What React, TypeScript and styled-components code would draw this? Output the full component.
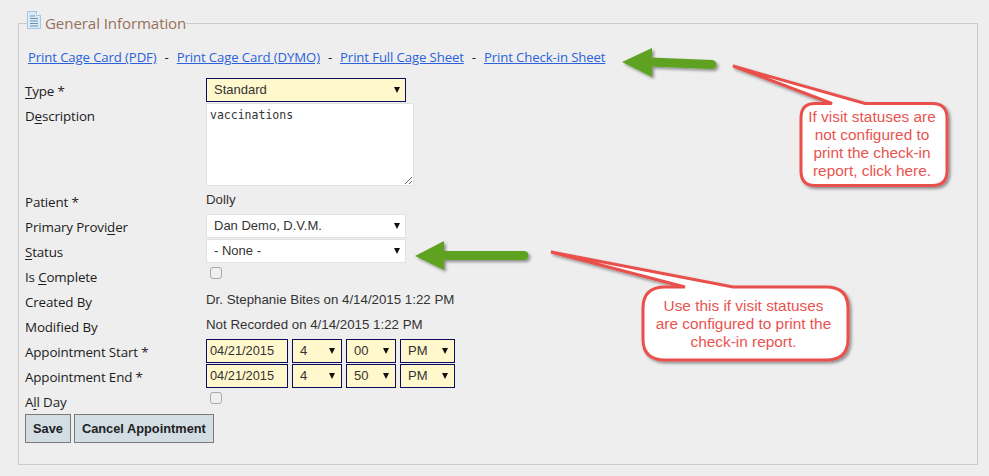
import styled, { createGlobalStyle } from "styled-components";

const GlobalStyle = createGlobalStyle`
  html, body {
    margin: 0;
    padding: 0;
    background: #eeeeee;
  }
  body {
    font-family: "Open Sans", "Noto Sans", sans-serif;
    color: #222;
  }
`;

const Page = styled.div`
  position: relative;
  width: 989px;
  height: 476px;
  overflow: hidden;
  padding: 11px 11px 0 18px;
  box-sizing: border-box;
`;

const Panel = styled.fieldset`
  margin: 0;
  padding: 0 6px;
  width: 960px;
  height: 454px;
  box-sizing: border-box;
  border: 1px solid #cbcbcb;
  border-radius: 0;
`;

const Legend = styled.legend`
  margin-left: 2px;
  padding: 0;
  display: flex;
  align-items: center;
  gap: 4px;
  height: 25px;
  font-size: 15.1px;
  line-height: 25px;
  color: #96705c;
  letter-spacing: -0.1px;
`;

const LinkBar = styled.div`
  display: flex;
  align-items: center;
  gap: 8px;
  height: 20px;
  margin: 11px 0 11px 3px;
  font-size: 13.2px;
  letter-spacing: -0.12px;
`;

const PrintLink = styled.a`
  color: #2b62dc;
  text-decoration: underline;
  cursor: pointer;
`;

const Row = styled.div<{ $height?: number }>`
  display: grid;
  grid-template-columns: 181px 1fr;
  height: ${({ $height }) => $height ?? 25}px;
`;

const Label = styled.label`
  font-size: 13.4px;
  line-height: 17px;
  padding-top: 5px;
  letter-spacing: -0.15px;
  color: #1c1c1c;
  u {
    text-underline-offset: 2px;
  }
`;

const Value = styled.div`
  font-family: "Liberation Sans", Arial, sans-serif;
  font-size: 13.3px;
  line-height: 22px;
  color: #333;
`;

const Fields = styled.div`
  display: flex;
  gap: 4px;
`;

const SelectWrap = styled.div<{ $width: number }>`
  position: relative;
  width: ${({ $width }) => $width}px;
  height: 24px;
  &::after {
    content: "";
    position: absolute;
    right: ${({ $width }) => ($width > 100 ? 6 : 7)}px;
    top: 9px;
    border-left: 3px solid transparent;
    border-right: 3px solid transparent;
    border-top: 6px solid #111;
    pointer-events: none;
  }
`;

const Select = styled.select<{ $required?: boolean }>`
  appearance: none;
  display: block;
  width: 100%;
  height: 100%;
  margin: 0;
  padding: 0 0 2px 7px;
  box-sizing: border-box;
  border-radius: 0;
  font-family: "Liberation Sans", Arial, sans-serif;
  font-size: 13px;
  color: #333;
  background: ${({ $required }) => ($required ? "#fff8cc" : "#ffffff")};
  border: 1px solid ${({ $required }) => ($required ? "#0b0b5c" : "#e2e2e2")};
  outline: none;
`;

const DateInput = styled.input`
  display: block;
  width: 82px;
  height: 24px;
  margin: 0;
  padding: 0 0 2px 3px;
  box-sizing: border-box;
  font-family: "Liberation Sans", Arial, sans-serif;
  font-size: 12.8px;
  color: #333;
  background: #fff8cc;
  border: 1px solid #0b0b5c;
  border-radius: 0;
  outline: none;
`;

const TextArea = styled.textarea`
  display: block;
  width: 208px;
  height: 83px;
  margin: 0;
  padding: 5px 3px;
  box-sizing: border-box;
  font-family: "DejaVu Sans Mono", "Liberation Mono", monospace;
  font-size: 11.5px;
  line-height: 13px;
  color: #333;
  background: #fff;
  border: 1px solid #e2e2e2;
  outline: none;
`;

const Check = styled.input`
  appearance: none;
  display: block;
  width: 12px;
  height: 12px;
  margin: 3px 0 0 4px;
  box-sizing: border-box;
  background: #efefef;
  border: 1px solid #a9a9a9;
  border-radius: 3px;
`;

const Buttons = styled.div`
  display: flex;
  gap: 3px;
`;

const Button = styled.button`
  height: 29px;
  padding: 0 7px;
  box-sizing: border-box;
  font-family: "Liberation Sans", Arial, sans-serif;
  font-size: 12.8px;
  font-weight: 700;
  color: #222;
  background: #d3dde4;
  border: 1px solid #7a7a7a;
  border-radius: 0;
`;

const Annotations = styled.svg`
  position: absolute;
  left: 0;
  top: 0;
  pointer-events: none;
`;

const CalloutText = styled.div<{ $x: number; $y: number; $w: number }>`
  position: absolute;
  left: ${({ $x }) => $x}px;
  top: ${({ $y }) => $y}px;
  width: ${({ $w }) => $w}px;
  text-align: center;
  font-family: "Liberation Sans", Arial, sans-serif;
  font-size: 15.4px;
  line-height: 18px;
  color: #ea5350;
`;

function DocIcon() {
  return (
    <svg width="14" height="18" viewBox="0 0 14 18" style={{ marginTop: -7 }}>
      <path d="M.5.5h9l4 4v13H.5z" fill="#dcebf8" stroke="#a9c6e0" />
      <path d="M9.5.5v4h4" fill="#fff" stroke="#a9c6e0" />
      <path d="M3 5h5M3 7.5h8M3 10h8M3 12.5h8M3 15h8" stroke="#6f8fae" />
    </svg>
  );
}

function Arrow({ d, head }: { d: string; head: string }) {
  return (
    <g filter="url(#soft)">
      <path d={d} fill="none" stroke="#5fa224" strokeWidth="9" strokeLinecap="round" />
      <path d={head} fill="#5fa224" />
    </g>
  );
}

function Overlay() {
  return (
    <Annotations width="989" height="476" viewBox="0 0 989 476">
      <defs>
        <filter id="soft" x="-20%" y="-20%" width="150%" height="150%">
          <feDropShadow dx="2" dy="2" stdDeviation="1.5" floodColor="#000" floodOpacity="0.4" />
        </filter>
      </defs>
      <Arrow d="M650 62 L712 64.5" head="M622 62 L652 48 L652 77 Z" />
      <Arrow d="M442 255.5 L524 255.5" head="M415 256 L444 241 L444 270 Z" />
      <path
        d="M733 66 L832 103.5 H815 Q801 103.5 801 118 V171 Q801 185.5 815 185.5 H932 Q947 185.5 947 171 V118 Q947 103.5 932 103.5 H865 Z"
        fill="#fff"
        stroke="#e9504b"
        strokeWidth="3"
        filter="url(#soft)"
      />
      <path
        d="M551 252 L685 287 H665 Q643 287 643 308 V339 Q643 360 665 360 H826 Q848 360 848 339 V308 Q848 287 826 287 H733 Z"
        fill="#fff"
        stroke="#e9504b"
        strokeWidth="3"
        filter="url(#soft)"
      />
    </Annotations>
  );
}

function TimeFields({ hour, minute }: { hour: string; minute: string }) {
  return (
    <Fields>
      <DateInput readOnly value="04/21/2015" />
      <SelectWrap $width={50}>
        <Select $required>
          <option>{hour}</option>
        </Select>
      </SelectWrap>
      <SelectWrap $width={50}>
        <Select $required>
          <option>{minute}</option>
        </Select>
      </SelectWrap>
      <SelectWrap $width={55}>
        <Select $required>
          <option>PM</option>
        </Select>
      </SelectWrap>
    </Fields>
  );
}

export default function App() {
  return (
    <Page>
      <GlobalStyle />
      <Panel>
        <Legend>
          <DocIcon />
          General Information
        </Legend>
        <LinkBar>
          <PrintLink>Print Cage Card (PDF)</PrintLink>-
          <PrintLink>Print Cage Card (DYMO)</PrintLink>-
          <PrintLink>Print Full Cage Sheet</PrintLink>-
          <PrintLink>Print Check-in Sheet</PrintLink>
        </LinkBar>
        <Row>
          <Label><u>T</u>ype *</Label>
          <SelectWrap $width={200}>
            <Select $required>
              <option>Standard</option>
            </Select>
          </SelectWrap>
        </Row>
        <Row $height={86}>
          <Label>D<u>e</u>scription</Label>
          <TextArea readOnly value="vaccinations" />
        </Row>
        <Row>
          <Label>Patient *</Label>
          <Value>Dolly</Value>
        </Row>
        <Row>
          <Label>Primary Provi<u>d</u>er</Label>
          <SelectWrap $width={200}>
            <Select>
              <option>Dan Demo, D.V.M.</option>
            </Select>
          </SelectWrap>
        </Row>
        <Row>
          <Label><u>S</u>tatus</Label>
          <SelectWrap $width={200}>
            <Select>
              <option>- None -</option>
            </Select>
          </SelectWrap>
        </Row>
        <Row>
          <Label>Is <u>C</u>omplete</Label>
          <Check type="checkbox" />
        </Row>
        <Row>
          <Label>Created By</Label>
          <Value>Dr. Stephanie Bites on 4/14/2015 1:22 PM</Value>
        </Row>
        <Row>
          <Label>Modified By</Label>
          <Value>Not Recorded on 4/14/2015 1:22 PM</Value>
        </Row>
        <Row>
          <Label>Appointment Start *</Label>
          <TimeFields hour="4" minute="00" />
        </Row>
        <Row>
          <Label>Appointment End *</Label>
          <TimeFields hour="4" minute="50" />
        </Row>
        <Row>
          <Label>A<u>l</u>l Day</Label>
          <Check type="checkbox" />
        </Row>
        <Buttons>
          <Button>Save</Button>
          <Button>Cancel Appointment</Button>
        </Buttons>
      </Panel>
      <Overlay />
      <CalloutText $x={799} $y={108} $w={146}>
        If visit statuses are
        <br />
        not configured to
        <br />
        print the check-in
        <br />
        report, click here.
      </CalloutText>
      <CalloutText $x={641} $y={297} $w={205}>
        Use this if visit statuses
        <br />
        are configured to print the
        <br />
        check-in report.
      </CalloutText>
    </Page>
  );
}
